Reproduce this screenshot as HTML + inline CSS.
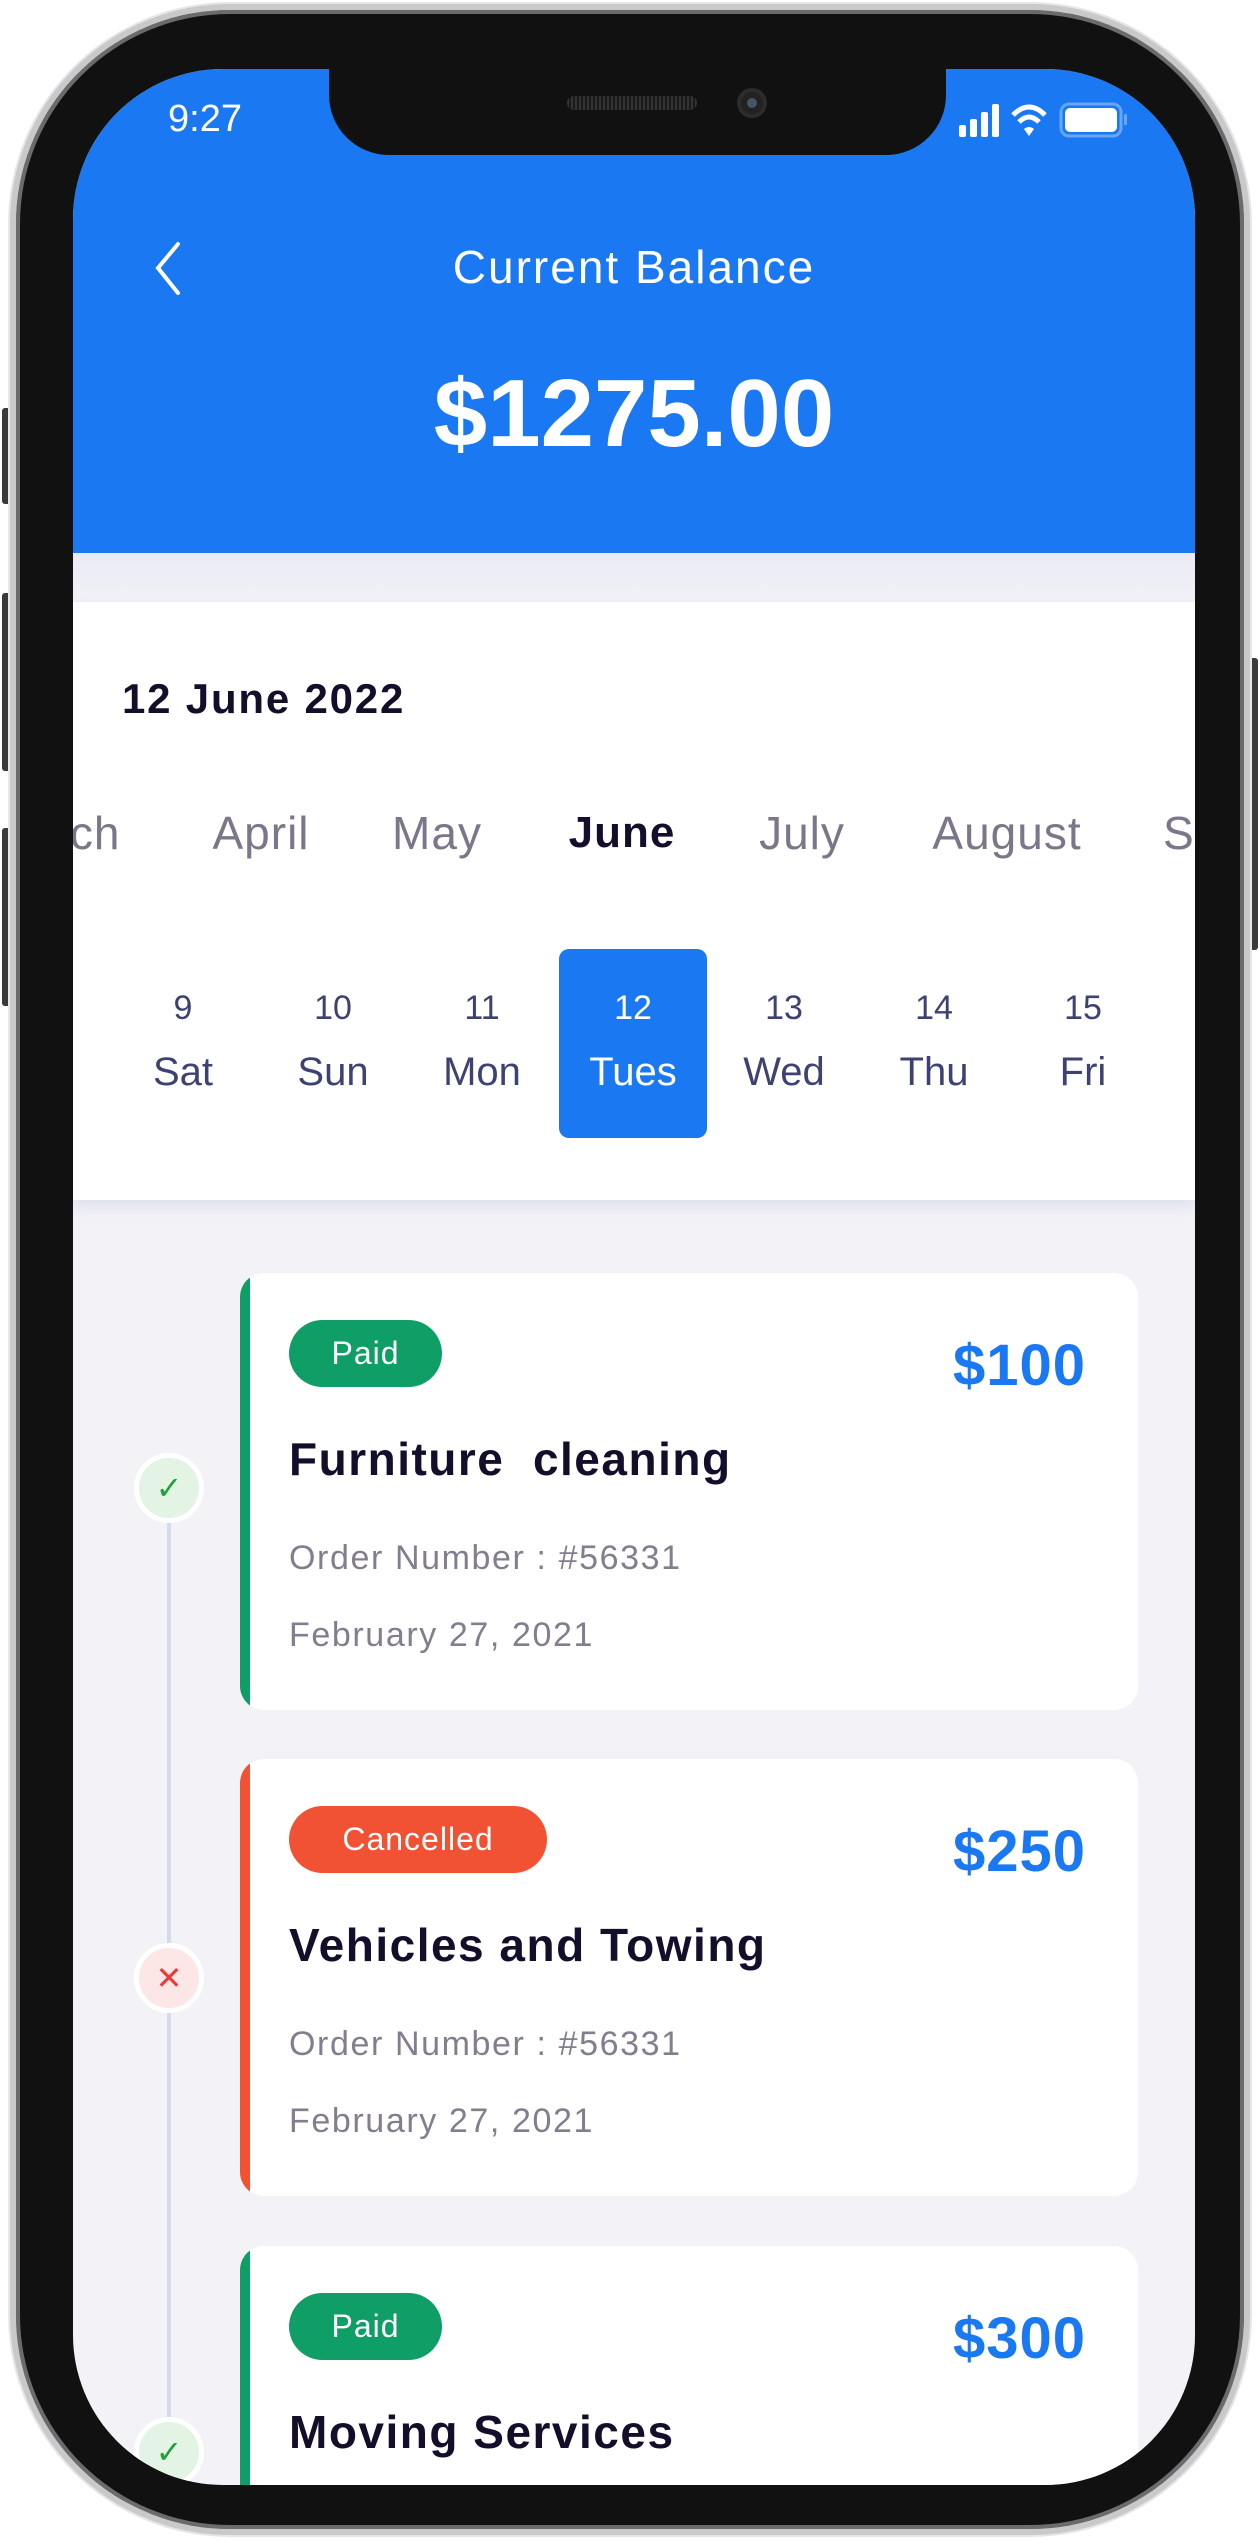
<!DOCTYPE html>
<html><head><meta charset="utf-8"><style>
*{margin:0;padding:0;box-sizing:border-box}
body{width:1260px;height:2541px;background:#fff;position:relative;overflow:hidden;font-family:"Liberation Sans",sans-serif}
.abs{position:absolute}
.frame{left:10px;top:4px;width:1240px;height:2531px;border-radius:220px;background:#111;border:6px solid #c9c9cc;box-shadow:inset 0 0 0 4px #6b6b6b, 0 0 0 2px #e6e6e6}
.screen{left:73px;top:69px;width:1122px;height:2416px;border-radius:150px;overflow:hidden;background:#f2f2f7}
.btn{background:#3a3a3a;border-radius:3px}
.c{text-align:center;white-space:nowrap}
.mon{top:736px;font-size:46px;color:#7b7689;line-height:56px;transform:translateX(-50%);white-space:nowrap;letter-spacing:1px}
.dn{top:919px;font-size:34px;color:#3d4272;line-height:40px;width:140px;margin-left:-70px}
.dd{top:978px;font-size:40px;color:#3d4272;line-height:50px;width:140px;margin-left:-70px}
.card{left:167px;width:898px;height:437px;background:#fff;border-radius:24px;overflow:hidden}
.bar{left:0;top:0;width:10px;height:100%}
.pill{left:49px;top:47px;height:67px;border-radius:34px;color:#fff;font-size:32px;line-height:67px;text-align:center;letter-spacing:1px}
.amt{right:52px;top:60px;font-size:58px;font-weight:bold;color:#1a78f2;line-height:66px;letter-spacing:1px}
.ttl{left:49px;top:158px;font-size:46px;font-weight:bold;color:#150e2b;line-height:56px;letter-spacing:1.5px}
.sub{left:49px;font-size:34px;color:#827e8e;line-height:40px;letter-spacing:1.6px}
.dot{width:70px;height:70px;border-radius:50%;border:5px solid #fff;left:61px;text-align:center;line-height:60px;font-size:32px}
</style></head><body>
<div class="abs btn" style="left:2px;top:408px;width:9px;height:96px"></div>
<div class="abs btn" style="left:2px;top:593px;width:9px;height:178px"></div>
<div class="abs btn" style="left:2px;top:828px;width:9px;height:178px"></div>
<div class="abs btn" style="left:1250px;top:658px;width:8px;height:292px"></div>
<div class="abs frame"></div>
<div class="abs screen">
  <div class="abs" style="left:0;top:0;width:1122px;height:484px;background:#1a78f2"></div>
  <div class="abs" style="left:0;top:484px;width:1122px;height:50px;background:linear-gradient(#e9eaf5,#f2f2f7)"></div>
  <div class="abs" style="left:256px;top:-5px;width:617px;height:91px;background:#111;border-radius:0 0 60px 60px"></div>
  <div class="abs" style="left:494px;top:27px;width:130px;height:14px;background:repeating-linear-gradient(90deg,#333 0 2px,#1a1a1a 2px 4px);border-radius:7px"></div>
  <div class="abs" style="left:664px;top:19px;width:30px;height:30px;border-radius:50%;background:#222;border:4px solid #2c2c2c"><div style="width:10px;height:10px;border-radius:50%;background:#456;margin:6px"></div></div>
  <div class="abs" style="left:95px;top:28px;font-size:38px;color:#fff;line-height:44px">9:27</div>
  <svg class="abs" style="left:884px;top:32px" width="200" height="38" viewBox="0 0 200 38">
    <rect x="2" y="24" width="7" height="12" rx="2" fill="#fff"/><rect x="13" y="18" width="7" height="18" rx="2" fill="#fff"/><rect x="24" y="11" width="7" height="25" rx="2" fill="#fff"/><rect x="35" y="3" width="7" height="33" rx="2" fill="#fff"/>
    <path d="M56 14 Q72 -2 88 14" stroke="#fff" stroke-width="5" fill="none"/><path d="M62 21 Q72 11 82 21" stroke="#fff" stroke-width="5" fill="none"/><path d="M67 28 L72 35 L77 28 Q72 24 67 28Z" fill="#fff"/>
    <rect x="104" y="3" width="60" height="32" rx="8" stroke="#6aa6f7" stroke-width="3" fill="none"/><rect x="108" y="7" width="52" height="24" rx="5" fill="#fff"/><rect x="167" y="13" width="3" height="11" rx="1" fill="#6aa6f7"/>
  </svg>
  <svg class="abs" style="left:80px;top:172px" width="30" height="55" viewBox="0 0 30 55"><path d="M25 3 L5 27 L25 52" stroke="#fff" stroke-width="4" fill="none" stroke-linecap="round"/></svg>
  <div class="abs c" style="left:0;width:1122px;top:170px;font-size:46px;color:#fff;line-height:56px;letter-spacing:2px">Current Balance</div>
  <div class="abs c" style="left:0;width:1122px;top:290px;font-size:96px;font-weight:bold;color:#fff;line-height:110px">$1275.00</div>

  <div class="abs" style="left:0;top:533px;width:1122px;height:598px;background:#fff;box-shadow:0 6px 12px rgba(200,205,230,.5)"></div>
  <div class="abs" style="left:49px;top:604px;font-size:42px;font-weight:bold;color:#150e2b;line-height:52px;letter-spacing:1.8px">12 June 2022</div>
  <div class="abs mon" style="left:14px">rch</div>
  <div class="abs mon" style="left:188px">April</div>
  <div class="abs mon" style="left:364px">May</div>
  <div class="abs mon" style="left:549px;color:#150e2b;font-weight:bold;font-size:44px">June</div>
  <div class="abs mon" style="left:729px">July</div>
  <div class="abs mon" style="left:934px">August</div>
  <div class="abs mon" style="left:1090px;transform:none">S</div>
  <div class="abs" style="left:486px;top:880px;width:148px;height:189px;background:#1a78f2;border-radius:10px"></div>
  <div class="abs dn c" style="left:110px">9</div><div class="abs dd c" style="left:110px">Sat</div>
  <div class="abs dn c" style="left:260px">10</div><div class="abs dd c" style="left:260px">Sun</div>
  <div class="abs dn c" style="left:409px">11</div><div class="abs dd c" style="left:409px">Mon</div>
  <div class="abs dn c" style="left:560px;color:#fff">12</div><div class="abs dd c" style="left:560px;color:#fff">Tues</div>
  <div class="abs dn c" style="left:711px">13</div><div class="abs dd c" style="left:711px">Wed</div>
  <div class="abs dn c" style="left:861px">14</div><div class="abs dd c" style="left:861px">Thu</div>
  <div class="abs dn c" style="left:1010px">15</div><div class="abs dd c" style="left:1010px">Fri</div>

  <div class="abs" style="left:94px;top:1420px;width:4px;height:1000px;background:#d2dcec"></div>
  <div class="abs dot" style="top:1384px;background:#e3f3e4;color:#22a03c">✓</div>
  <div class="abs dot" style="top:1874px;background:#fde6e6;color:#ea3a3a">✕</div>
  <div class="abs dot" style="top:2348px;background:#e3f3e4;color:#22a03c">✓</div>

  <div class="abs card" style="top:1204px"><div class="abs bar" style="background:#0f9e66"></div>
    <div class="abs pill" style="width:153px;background:#0f9e66">Paid</div><div class="abs amt">$100</div>
    <div class="abs ttl">Furniture&nbsp; cleaning</div>
    <div class="abs sub" style="top:265px">Order Number : #56331</div><div class="abs sub" style="top:342px">February 27, 2021</div></div>
  <div class="abs card" style="top:1690px"><div class="abs bar" style="background:#f25234"></div>
    <div class="abs pill" style="width:258px;background:#f25234">Cancelled</div><div class="abs amt">$250</div>
    <div class="abs ttl">Vehicles and Towing</div>
    <div class="abs sub" style="top:265px">Order Number : #56331</div><div class="abs sub" style="top:342px">February 27, 2021</div></div>
  <div class="abs card" style="top:2177px;height:300px"><div class="abs bar" style="background:#0f9e66"></div>
    <div class="abs pill" style="width:153px;background:#0f9e66">Paid</div><div class="abs amt">$300</div>
    <div class="abs ttl">Moving Services</div></div>
</div>
</body></html>
